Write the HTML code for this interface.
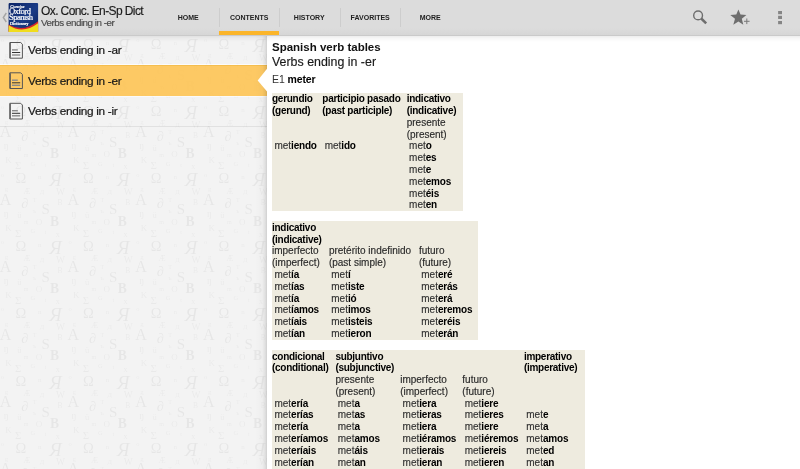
<!DOCTYPE html>
<html><head><meta charset="utf-8">
<style>
*{margin:0;padding:0;box-sizing:border-box}
html,body{width:800px;height:469px;overflow:hidden;background:#fff;font-family:"Liberation Sans",sans-serif;color:#111}
.abs{position:absolute;white-space:nowrap}
#hdr{position:absolute;left:0;top:0;width:800px;height:35px;background:linear-gradient(to bottom,#dcdcdc 0,#dcdcdc 80%,#d6d6d6 100%)}
#hline{position:absolute;left:0;top:35px;width:800px;height:1px;background:#cacaca}
#title{left:41px;top:3.6px;font-size:12px;letter-spacing:-0.6px;color:#1a1a1a;-webkit-text-stroke:0.15px #1a1a1a}
#sub{left:41px;top:16.8px;font-size:9.8px;letter-spacing:-0.47px;color:#4a4a4a;-webkit-text-stroke:0.15px #4a4a4a}
.tab{position:absolute;top:0;height:35px;width:60.4px;font-size:7px;font-weight:bold;color:#222;text-align:center;line-height:35px}
.sep{position:absolute;top:8px;width:1px;height:19px;background:#cdcdcd}
#ind{position:absolute;left:219px;top:31px;width:60px;height:4px;background:#fbb52a}
#left{position:absolute;left:0;top:36px;width:267px;height:433px;background:#f3f3f3;overflow:hidden}
#lshadow{position:absolute;left:255px;top:36px;width:12px;height:433px;background:linear-gradient(to right,rgba(0,0,0,0),rgba(0,0,0,0.02) 60%,rgba(0,0,0,0.08) 85%,rgba(0,0,0,0.15))}
.lt{left:28px;font-size:11.8px;letter-spacing:-0.3px;color:#161616;-webkit-text-stroke:0.2px #161616}
.divl{position:absolute;left:0;width:267px;height:1px;background:rgba(0,0,0,0.05)}
.doc{position:absolute;left:9px;width:14px;height:17px}
#right{position:absolute;left:267px;top:36px;width:533px;height:433px;background:#fff}
.tb{position:absolute;background:#eeebdf}
.col{position:absolute;white-space:nowrap;font-size:10px;line-height:11.8px;color:#111}
.col b{font-weight:bold;letter-spacing:-0.27px;color:#000}
.col .r{color:#2a2a2a;-webkit-text-stroke:0.15px #2a2a2a}
.col .d{margin-left:2.4px;color:#333;-webkit-text-stroke:0.15px #333}
.col .d b{letter-spacing:-0.2px;color:#000;-webkit-text-stroke:0}
</style></head><body><div id="wrap" style="position:absolute;left:0;top:0;width:800px;height:469px;overflow:hidden;will-change:transform">
<div id="hdr">
  <svg class="abs" style="left:0;top:0" width="800" height="35" viewBox="0 0 800 35">
    <path d="M6.3 13 L3.3 17.5 L6.3 22" fill="none" stroke="#a5a5a5" stroke-width="1.4"/>
    <!-- logo -->
    <defs>
      <linearGradient id="lg" x1="0" y1="0" x2="1" y2="1">
        <stop offset="0" stop-color="#0c2466"/><stop offset="0.55" stop-color="#1a3b86"/><stop offset="1" stop-color="#0a1f5a"/>
      </linearGradient>
    </defs>
    <rect x="8.6" y="3" width="29.5" height="29" rx="1" fill="url(#lg)"/>
    <path d="M8.6 24.6 Q23 33 38.1 21.3 L38.1 32 L8.6 32 Z" fill="#d8262c"/>
    <path d="M8.6 25.2 Q23 34.5 38.1 23.2 L38.1 32 L8.6 32 Z" fill="#f0dc1e"/>
    <g fill="#fff" stroke="#fff" stroke-width="0.2" font-family="Liberation Serif" >
      <text x="10.3" y="7.9" font-size="4.4" font-style="italic">Concise</text>
      <text x="8.9" y="14.3" font-size="8.6" letter-spacing="-0.55">Oxford</text>
      <text x="8.9" y="20.4" font-size="8.6" letter-spacing="-0.5">Spanish</text>
      <text x="10" y="25" font-size="4.3">Dictionary</text>
    </g>
    <!-- search -->
    <circle cx="698.1" cy="15.4" r="4.4" fill="none" stroke="#6e6e6e" stroke-width="1.4"/>
    <path d="M701.2 18.5 L706.2 23.3" stroke="#6e6e6e" stroke-width="2.5" stroke-linecap="butt"/>
    <!-- star plus -->
    <path d="M738.4 9.5 L740.5 14.6 L746.4 15 L741.8 18.7 L743.3 24.7 L738.4 21.4 L733.3 24.7 L735 18.7 L730.3 15 L736.3 14.6 Z" fill="#6e6e6e"/>
    <path d="M744 21.3 H749.6 M746.8 18.5 V24.1" stroke="#7a7a7a" stroke-width="1"/>
    <!-- overflow -->
    <rect x="778.1" y="11" width="3.9" height="3.2" fill="#858585"/>
    <rect x="778.1" y="15.8" width="3.9" height="3.2" fill="#858585"/>
    <rect x="778.1" y="21" width="3.9" height="3.2" fill="#858585"/>
  </svg>
  <div class="abs" id="title">Ox. Conc. En-Sp Dict</div>
  <div class="abs" id="sub">Verbs ending in -er</div>
  <div class="tab" style="left:158px">HOME</div>
  <div class="sep" style="left:219px"></div>
  <div class="tab" style="left:219px">CONTENTS</div>
  <div class="sep" style="left:279px"></div>
  <div class="tab" style="left:279px">HISTORY</div>
  <div class="sep" style="left:340px"></div>
  <div class="tab" style="left:340px">FAVORITES</div>
  <div class="sep" style="left:400px"></div>
  <div class="tab" style="left:400px">MORE</div>
  <div id="ind"></div>
</div>
<div id="hline"></div>
<div id="left"></div>
<svg class="abs" style="left:0;top:36px" width="267" height="433">
<g transform="translate(-0.2 -45.5)"><g font-family="Liberation Serif" fill="#000">
<g fill-opacity="0.05">
<text x="0.0" y="12.0" font-size="16.0">A</text>
<text x="21.5" y="15.7" font-size="14.0">&#8706;</text>
<text x="41.6" y="21.7" font-size="15.0">S</text>
<text x="50.2" y="32.9" font-size="13.6" font-weight="bold">B</text>
<text x="15.6" y="58.0" font-size="14.5">&#937;</text>
<text x="49.5" y="61.0" font-size="19.0" font-style="italic">&#1071;</text>
</g><g fill-opacity="0.04">
<text x="33.0" y="9.0" font-size="6.0">T</text>
<text x="57.8" y="12.7" font-size="7.5">B</text>
<text x="33.0" y="20.2" font-size="6.5">&#1098;</text>
<text x="4.0" y="24.0" font-size="10.0">&#331;</text>
<text x="17.4" y="25.4" font-size="8.5">&#252;</text>
<text x="24.0" y="31.4" font-size="6.0">m</text>
<text x="36.0" y="32.0" font-size="9.0">O</text>
<text x="5.5" y="38.0" font-size="9.0">K</text>
<text x="15.2" y="44.0" font-size="11.0">&#931;</text>
<text x="30.6" y="40.4" font-size="6.5">G</text>
<text x="45.0" y="41.5" font-size="6.0">t</text>
<text x="56.0" y="44.0" font-size="8.0">x</text>
<text x="1.0" y="51.3" font-size="6.5">o</text>
<text x="38.3" y="54.0" font-size="7.0">n</text>
<text x="23.4" y="68.4" font-size="8.0">&#198;</text>
<text x="5.0" y="66.0" font-size="7.0">g</text>
<text x="40.0" y="69.0" font-size="6.5">&#1044;</text>
<text x="56.2" y="70.0" font-size="9.5">W</text>
</g></g></g>
<g transform="translate(-0.2 21.9)"><g font-family="Liberation Serif" fill="#000">
<g fill-opacity="0.05">
<text x="0.0" y="12.0" font-size="16.0">A</text>
<text x="21.5" y="15.7" font-size="14.0">&#8706;</text>
<text x="41.6" y="21.7" font-size="15.0">S</text>
<text x="50.2" y="32.9" font-size="13.6" font-weight="bold">B</text>
<text x="15.6" y="58.0" font-size="14.5">&#937;</text>
<text x="49.5" y="61.0" font-size="19.0" font-style="italic">&#1071;</text>
</g><g fill-opacity="0.04">
<text x="33.0" y="9.0" font-size="6.0">T</text>
<text x="57.8" y="12.7" font-size="7.5">B</text>
<text x="33.0" y="20.2" font-size="6.5">&#1098;</text>
<text x="4.0" y="24.0" font-size="10.0">&#331;</text>
<text x="17.4" y="25.4" font-size="8.5">&#252;</text>
<text x="24.0" y="31.4" font-size="6.0">m</text>
<text x="36.0" y="32.0" font-size="9.0">O</text>
<text x="5.5" y="38.0" font-size="9.0">K</text>
<text x="15.2" y="44.0" font-size="11.0">&#931;</text>
<text x="30.6" y="40.4" font-size="6.5">G</text>
<text x="45.0" y="41.5" font-size="6.0">t</text>
<text x="56.0" y="44.0" font-size="8.0">x</text>
<text x="1.0" y="51.3" font-size="6.5">o</text>
<text x="38.3" y="54.0" font-size="7.0">n</text>
<text x="23.4" y="68.4" font-size="8.0">&#198;</text>
<text x="5.0" y="66.0" font-size="7.0">g</text>
<text x="40.0" y="69.0" font-size="6.5">&#1044;</text>
<text x="56.2" y="70.0" font-size="9.5">W</text>
</g></g></g>
<g transform="translate(-0.2 89.3)"><g font-family="Liberation Serif" fill="#000">
<g fill-opacity="0.05">
<text x="0.0" y="12.0" font-size="16.0">A</text>
<text x="21.5" y="15.7" font-size="14.0">&#8706;</text>
<text x="41.6" y="21.7" font-size="15.0">S</text>
<text x="50.2" y="32.9" font-size="13.6" font-weight="bold">B</text>
<text x="15.6" y="58.0" font-size="14.5">&#937;</text>
<text x="49.5" y="61.0" font-size="19.0" font-style="italic">&#1071;</text>
</g><g fill-opacity="0.04">
<text x="33.0" y="9.0" font-size="6.0">T</text>
<text x="57.8" y="12.7" font-size="7.5">B</text>
<text x="33.0" y="20.2" font-size="6.5">&#1098;</text>
<text x="4.0" y="24.0" font-size="10.0">&#331;</text>
<text x="17.4" y="25.4" font-size="8.5">&#252;</text>
<text x="24.0" y="31.4" font-size="6.0">m</text>
<text x="36.0" y="32.0" font-size="9.0">O</text>
<text x="5.5" y="38.0" font-size="9.0">K</text>
<text x="15.2" y="44.0" font-size="11.0">&#931;</text>
<text x="30.6" y="40.4" font-size="6.5">G</text>
<text x="45.0" y="41.5" font-size="6.0">t</text>
<text x="56.0" y="44.0" font-size="8.0">x</text>
<text x="1.0" y="51.3" font-size="6.5">o</text>
<text x="38.3" y="54.0" font-size="7.0">n</text>
<text x="23.4" y="68.4" font-size="8.0">&#198;</text>
<text x="5.0" y="66.0" font-size="7.0">g</text>
<text x="40.0" y="69.0" font-size="6.5">&#1044;</text>
<text x="56.2" y="70.0" font-size="9.5">W</text>
</g></g></g>
<g transform="translate(-0.2 156.7)"><g font-family="Liberation Serif" fill="#000">
<g fill-opacity="0.05">
<text x="0.0" y="12.0" font-size="16.0">A</text>
<text x="21.5" y="15.7" font-size="14.0">&#8706;</text>
<text x="41.6" y="21.7" font-size="15.0">S</text>
<text x="50.2" y="32.9" font-size="13.6" font-weight="bold">B</text>
<text x="15.6" y="58.0" font-size="14.5">&#937;</text>
<text x="49.5" y="61.0" font-size="19.0" font-style="italic">&#1071;</text>
</g><g fill-opacity="0.04">
<text x="33.0" y="9.0" font-size="6.0">T</text>
<text x="57.8" y="12.7" font-size="7.5">B</text>
<text x="33.0" y="20.2" font-size="6.5">&#1098;</text>
<text x="4.0" y="24.0" font-size="10.0">&#331;</text>
<text x="17.4" y="25.4" font-size="8.5">&#252;</text>
<text x="24.0" y="31.4" font-size="6.0">m</text>
<text x="36.0" y="32.0" font-size="9.0">O</text>
<text x="5.5" y="38.0" font-size="9.0">K</text>
<text x="15.2" y="44.0" font-size="11.0">&#931;</text>
<text x="30.6" y="40.4" font-size="6.5">G</text>
<text x="45.0" y="41.5" font-size="6.0">t</text>
<text x="56.0" y="44.0" font-size="8.0">x</text>
<text x="1.0" y="51.3" font-size="6.5">o</text>
<text x="38.3" y="54.0" font-size="7.0">n</text>
<text x="23.4" y="68.4" font-size="8.0">&#198;</text>
<text x="5.0" y="66.0" font-size="7.0">g</text>
<text x="40.0" y="69.0" font-size="6.5">&#1044;</text>
<text x="56.2" y="70.0" font-size="9.5">W</text>
</g></g></g>
<g transform="translate(-0.2 224.1)"><g font-family="Liberation Serif" fill="#000">
<g fill-opacity="0.05">
<text x="0.0" y="12.0" font-size="16.0">A</text>
<text x="21.5" y="15.7" font-size="14.0">&#8706;</text>
<text x="41.6" y="21.7" font-size="15.0">S</text>
<text x="50.2" y="32.9" font-size="13.6" font-weight="bold">B</text>
<text x="15.6" y="58.0" font-size="14.5">&#937;</text>
<text x="49.5" y="61.0" font-size="19.0" font-style="italic">&#1071;</text>
</g><g fill-opacity="0.04">
<text x="33.0" y="9.0" font-size="6.0">T</text>
<text x="57.8" y="12.7" font-size="7.5">B</text>
<text x="33.0" y="20.2" font-size="6.5">&#1098;</text>
<text x="4.0" y="24.0" font-size="10.0">&#331;</text>
<text x="17.4" y="25.4" font-size="8.5">&#252;</text>
<text x="24.0" y="31.4" font-size="6.0">m</text>
<text x="36.0" y="32.0" font-size="9.0">O</text>
<text x="5.5" y="38.0" font-size="9.0">K</text>
<text x="15.2" y="44.0" font-size="11.0">&#931;</text>
<text x="30.6" y="40.4" font-size="6.5">G</text>
<text x="45.0" y="41.5" font-size="6.0">t</text>
<text x="56.0" y="44.0" font-size="8.0">x</text>
<text x="1.0" y="51.3" font-size="6.5">o</text>
<text x="38.3" y="54.0" font-size="7.0">n</text>
<text x="23.4" y="68.4" font-size="8.0">&#198;</text>
<text x="5.0" y="66.0" font-size="7.0">g</text>
<text x="40.0" y="69.0" font-size="6.5">&#1044;</text>
<text x="56.2" y="70.0" font-size="9.5">W</text>
</g></g></g>
<g transform="translate(-0.2 291.5)"><g font-family="Liberation Serif" fill="#000">
<g fill-opacity="0.05">
<text x="0.0" y="12.0" font-size="16.0">A</text>
<text x="21.5" y="15.7" font-size="14.0">&#8706;</text>
<text x="41.6" y="21.7" font-size="15.0">S</text>
<text x="50.2" y="32.9" font-size="13.6" font-weight="bold">B</text>
<text x="15.6" y="58.0" font-size="14.5">&#937;</text>
<text x="49.5" y="61.0" font-size="19.0" font-style="italic">&#1071;</text>
</g><g fill-opacity="0.04">
<text x="33.0" y="9.0" font-size="6.0">T</text>
<text x="57.8" y="12.7" font-size="7.5">B</text>
<text x="33.0" y="20.2" font-size="6.5">&#1098;</text>
<text x="4.0" y="24.0" font-size="10.0">&#331;</text>
<text x="17.4" y="25.4" font-size="8.5">&#252;</text>
<text x="24.0" y="31.4" font-size="6.0">m</text>
<text x="36.0" y="32.0" font-size="9.0">O</text>
<text x="5.5" y="38.0" font-size="9.0">K</text>
<text x="15.2" y="44.0" font-size="11.0">&#931;</text>
<text x="30.6" y="40.4" font-size="6.5">G</text>
<text x="45.0" y="41.5" font-size="6.0">t</text>
<text x="56.0" y="44.0" font-size="8.0">x</text>
<text x="1.0" y="51.3" font-size="6.5">o</text>
<text x="38.3" y="54.0" font-size="7.0">n</text>
<text x="23.4" y="68.4" font-size="8.0">&#198;</text>
<text x="5.0" y="66.0" font-size="7.0">g</text>
<text x="40.0" y="69.0" font-size="6.5">&#1044;</text>
<text x="56.2" y="70.0" font-size="9.5">W</text>
</g></g></g>
<g transform="translate(-0.2 358.9)"><g font-family="Liberation Serif" fill="#000">
<g fill-opacity="0.05">
<text x="0.0" y="12.0" font-size="16.0">A</text>
<text x="21.5" y="15.7" font-size="14.0">&#8706;</text>
<text x="41.6" y="21.7" font-size="15.0">S</text>
<text x="50.2" y="32.9" font-size="13.6" font-weight="bold">B</text>
<text x="15.6" y="58.0" font-size="14.5">&#937;</text>
<text x="49.5" y="61.0" font-size="19.0" font-style="italic">&#1071;</text>
</g><g fill-opacity="0.04">
<text x="33.0" y="9.0" font-size="6.0">T</text>
<text x="57.8" y="12.7" font-size="7.5">B</text>
<text x="33.0" y="20.2" font-size="6.5">&#1098;</text>
<text x="4.0" y="24.0" font-size="10.0">&#331;</text>
<text x="17.4" y="25.4" font-size="8.5">&#252;</text>
<text x="24.0" y="31.4" font-size="6.0">m</text>
<text x="36.0" y="32.0" font-size="9.0">O</text>
<text x="5.5" y="38.0" font-size="9.0">K</text>
<text x="15.2" y="44.0" font-size="11.0">&#931;</text>
<text x="30.6" y="40.4" font-size="6.5">G</text>
<text x="45.0" y="41.5" font-size="6.0">t</text>
<text x="56.0" y="44.0" font-size="8.0">x</text>
<text x="1.0" y="51.3" font-size="6.5">o</text>
<text x="38.3" y="54.0" font-size="7.0">n</text>
<text x="23.4" y="68.4" font-size="8.0">&#198;</text>
<text x="5.0" y="66.0" font-size="7.0">g</text>
<text x="40.0" y="69.0" font-size="6.5">&#1044;</text>
<text x="56.2" y="70.0" font-size="9.5">W</text>
</g></g></g>
<g transform="translate(-0.2 426.3)"><g font-family="Liberation Serif" fill="#000">
<g fill-opacity="0.05">
<text x="0.0" y="12.0" font-size="16.0">A</text>
<text x="21.5" y="15.7" font-size="14.0">&#8706;</text>
<text x="41.6" y="21.7" font-size="15.0">S</text>
<text x="50.2" y="32.9" font-size="13.6" font-weight="bold">B</text>
<text x="15.6" y="58.0" font-size="14.5">&#937;</text>
<text x="49.5" y="61.0" font-size="19.0" font-style="italic">&#1071;</text>
</g><g fill-opacity="0.04">
<text x="33.0" y="9.0" font-size="6.0">T</text>
<text x="57.8" y="12.7" font-size="7.5">B</text>
<text x="33.0" y="20.2" font-size="6.5">&#1098;</text>
<text x="4.0" y="24.0" font-size="10.0">&#331;</text>
<text x="17.4" y="25.4" font-size="8.5">&#252;</text>
<text x="24.0" y="31.4" font-size="6.0">m</text>
<text x="36.0" y="32.0" font-size="9.0">O</text>
<text x="5.5" y="38.0" font-size="9.0">K</text>
<text x="15.2" y="44.0" font-size="11.0">&#931;</text>
<text x="30.6" y="40.4" font-size="6.5">G</text>
<text x="45.0" y="41.5" font-size="6.0">t</text>
<text x="56.0" y="44.0" font-size="8.0">x</text>
<text x="1.0" y="51.3" font-size="6.5">o</text>
<text x="38.3" y="54.0" font-size="7.0">n</text>
<text x="23.4" y="68.4" font-size="8.0">&#198;</text>
<text x="5.0" y="66.0" font-size="7.0">g</text>
<text x="40.0" y="69.0" font-size="6.5">&#1044;</text>
<text x="56.2" y="70.0" font-size="9.5">W</text>
</g></g></g>
<g transform="translate(67.5 -45.5)"><g font-family="Liberation Serif" fill="#000">
<g fill-opacity="0.05">
<text x="0.0" y="12.0" font-size="16.0">A</text>
<text x="21.5" y="15.7" font-size="14.0">&#8706;</text>
<text x="41.6" y="21.7" font-size="15.0">S</text>
<text x="50.2" y="32.9" font-size="13.6" font-weight="bold">B</text>
<text x="15.6" y="58.0" font-size="14.5">&#937;</text>
<text x="49.5" y="61.0" font-size="19.0" font-style="italic">&#1071;</text>
</g><g fill-opacity="0.04">
<text x="33.0" y="9.0" font-size="6.0">T</text>
<text x="57.8" y="12.7" font-size="7.5">B</text>
<text x="33.0" y="20.2" font-size="6.5">&#1098;</text>
<text x="4.0" y="24.0" font-size="10.0">&#331;</text>
<text x="17.4" y="25.4" font-size="8.5">&#252;</text>
<text x="24.0" y="31.4" font-size="6.0">m</text>
<text x="36.0" y="32.0" font-size="9.0">O</text>
<text x="5.5" y="38.0" font-size="9.0">K</text>
<text x="15.2" y="44.0" font-size="11.0">&#931;</text>
<text x="30.6" y="40.4" font-size="6.5">G</text>
<text x="45.0" y="41.5" font-size="6.0">t</text>
<text x="56.0" y="44.0" font-size="8.0">x</text>
<text x="1.0" y="51.3" font-size="6.5">o</text>
<text x="38.3" y="54.0" font-size="7.0">n</text>
<text x="23.4" y="68.4" font-size="8.0">&#198;</text>
<text x="5.0" y="66.0" font-size="7.0">g</text>
<text x="40.0" y="69.0" font-size="6.5">&#1044;</text>
<text x="56.2" y="70.0" font-size="9.5">W</text>
</g></g></g>
<g transform="translate(67.5 21.9)"><g font-family="Liberation Serif" fill="#000">
<g fill-opacity="0.05">
<text x="0.0" y="12.0" font-size="16.0">A</text>
<text x="21.5" y="15.7" font-size="14.0">&#8706;</text>
<text x="41.6" y="21.7" font-size="15.0">S</text>
<text x="50.2" y="32.9" font-size="13.6" font-weight="bold">B</text>
<text x="15.6" y="58.0" font-size="14.5">&#937;</text>
<text x="49.5" y="61.0" font-size="19.0" font-style="italic">&#1071;</text>
</g><g fill-opacity="0.04">
<text x="33.0" y="9.0" font-size="6.0">T</text>
<text x="57.8" y="12.7" font-size="7.5">B</text>
<text x="33.0" y="20.2" font-size="6.5">&#1098;</text>
<text x="4.0" y="24.0" font-size="10.0">&#331;</text>
<text x="17.4" y="25.4" font-size="8.5">&#252;</text>
<text x="24.0" y="31.4" font-size="6.0">m</text>
<text x="36.0" y="32.0" font-size="9.0">O</text>
<text x="5.5" y="38.0" font-size="9.0">K</text>
<text x="15.2" y="44.0" font-size="11.0">&#931;</text>
<text x="30.6" y="40.4" font-size="6.5">G</text>
<text x="45.0" y="41.5" font-size="6.0">t</text>
<text x="56.0" y="44.0" font-size="8.0">x</text>
<text x="1.0" y="51.3" font-size="6.5">o</text>
<text x="38.3" y="54.0" font-size="7.0">n</text>
<text x="23.4" y="68.4" font-size="8.0">&#198;</text>
<text x="5.0" y="66.0" font-size="7.0">g</text>
<text x="40.0" y="69.0" font-size="6.5">&#1044;</text>
<text x="56.2" y="70.0" font-size="9.5">W</text>
</g></g></g>
<g transform="translate(67.5 89.3)"><g font-family="Liberation Serif" fill="#000">
<g fill-opacity="0.05">
<text x="0.0" y="12.0" font-size="16.0">A</text>
<text x="21.5" y="15.7" font-size="14.0">&#8706;</text>
<text x="41.6" y="21.7" font-size="15.0">S</text>
<text x="50.2" y="32.9" font-size="13.6" font-weight="bold">B</text>
<text x="15.6" y="58.0" font-size="14.5">&#937;</text>
<text x="49.5" y="61.0" font-size="19.0" font-style="italic">&#1071;</text>
</g><g fill-opacity="0.04">
<text x="33.0" y="9.0" font-size="6.0">T</text>
<text x="57.8" y="12.7" font-size="7.5">B</text>
<text x="33.0" y="20.2" font-size="6.5">&#1098;</text>
<text x="4.0" y="24.0" font-size="10.0">&#331;</text>
<text x="17.4" y="25.4" font-size="8.5">&#252;</text>
<text x="24.0" y="31.4" font-size="6.0">m</text>
<text x="36.0" y="32.0" font-size="9.0">O</text>
<text x="5.5" y="38.0" font-size="9.0">K</text>
<text x="15.2" y="44.0" font-size="11.0">&#931;</text>
<text x="30.6" y="40.4" font-size="6.5">G</text>
<text x="45.0" y="41.5" font-size="6.0">t</text>
<text x="56.0" y="44.0" font-size="8.0">x</text>
<text x="1.0" y="51.3" font-size="6.5">o</text>
<text x="38.3" y="54.0" font-size="7.0">n</text>
<text x="23.4" y="68.4" font-size="8.0">&#198;</text>
<text x="5.0" y="66.0" font-size="7.0">g</text>
<text x="40.0" y="69.0" font-size="6.5">&#1044;</text>
<text x="56.2" y="70.0" font-size="9.5">W</text>
</g></g></g>
<g transform="translate(67.5 156.7)"><g font-family="Liberation Serif" fill="#000">
<g fill-opacity="0.05">
<text x="0.0" y="12.0" font-size="16.0">A</text>
<text x="21.5" y="15.7" font-size="14.0">&#8706;</text>
<text x="41.6" y="21.7" font-size="15.0">S</text>
<text x="50.2" y="32.9" font-size="13.6" font-weight="bold">B</text>
<text x="15.6" y="58.0" font-size="14.5">&#937;</text>
<text x="49.5" y="61.0" font-size="19.0" font-style="italic">&#1071;</text>
</g><g fill-opacity="0.04">
<text x="33.0" y="9.0" font-size="6.0">T</text>
<text x="57.8" y="12.7" font-size="7.5">B</text>
<text x="33.0" y="20.2" font-size="6.5">&#1098;</text>
<text x="4.0" y="24.0" font-size="10.0">&#331;</text>
<text x="17.4" y="25.4" font-size="8.5">&#252;</text>
<text x="24.0" y="31.4" font-size="6.0">m</text>
<text x="36.0" y="32.0" font-size="9.0">O</text>
<text x="5.5" y="38.0" font-size="9.0">K</text>
<text x="15.2" y="44.0" font-size="11.0">&#931;</text>
<text x="30.6" y="40.4" font-size="6.5">G</text>
<text x="45.0" y="41.5" font-size="6.0">t</text>
<text x="56.0" y="44.0" font-size="8.0">x</text>
<text x="1.0" y="51.3" font-size="6.5">o</text>
<text x="38.3" y="54.0" font-size="7.0">n</text>
<text x="23.4" y="68.4" font-size="8.0">&#198;</text>
<text x="5.0" y="66.0" font-size="7.0">g</text>
<text x="40.0" y="69.0" font-size="6.5">&#1044;</text>
<text x="56.2" y="70.0" font-size="9.5">W</text>
</g></g></g>
<g transform="translate(67.5 224.1)"><g font-family="Liberation Serif" fill="#000">
<g fill-opacity="0.05">
<text x="0.0" y="12.0" font-size="16.0">A</text>
<text x="21.5" y="15.7" font-size="14.0">&#8706;</text>
<text x="41.6" y="21.7" font-size="15.0">S</text>
<text x="50.2" y="32.9" font-size="13.6" font-weight="bold">B</text>
<text x="15.6" y="58.0" font-size="14.5">&#937;</text>
<text x="49.5" y="61.0" font-size="19.0" font-style="italic">&#1071;</text>
</g><g fill-opacity="0.04">
<text x="33.0" y="9.0" font-size="6.0">T</text>
<text x="57.8" y="12.7" font-size="7.5">B</text>
<text x="33.0" y="20.2" font-size="6.5">&#1098;</text>
<text x="4.0" y="24.0" font-size="10.0">&#331;</text>
<text x="17.4" y="25.4" font-size="8.5">&#252;</text>
<text x="24.0" y="31.4" font-size="6.0">m</text>
<text x="36.0" y="32.0" font-size="9.0">O</text>
<text x="5.5" y="38.0" font-size="9.0">K</text>
<text x="15.2" y="44.0" font-size="11.0">&#931;</text>
<text x="30.6" y="40.4" font-size="6.5">G</text>
<text x="45.0" y="41.5" font-size="6.0">t</text>
<text x="56.0" y="44.0" font-size="8.0">x</text>
<text x="1.0" y="51.3" font-size="6.5">o</text>
<text x="38.3" y="54.0" font-size="7.0">n</text>
<text x="23.4" y="68.4" font-size="8.0">&#198;</text>
<text x="5.0" y="66.0" font-size="7.0">g</text>
<text x="40.0" y="69.0" font-size="6.5">&#1044;</text>
<text x="56.2" y="70.0" font-size="9.5">W</text>
</g></g></g>
<g transform="translate(67.5 291.5)"><g font-family="Liberation Serif" fill="#000">
<g fill-opacity="0.05">
<text x="0.0" y="12.0" font-size="16.0">A</text>
<text x="21.5" y="15.7" font-size="14.0">&#8706;</text>
<text x="41.6" y="21.7" font-size="15.0">S</text>
<text x="50.2" y="32.9" font-size="13.6" font-weight="bold">B</text>
<text x="15.6" y="58.0" font-size="14.5">&#937;</text>
<text x="49.5" y="61.0" font-size="19.0" font-style="italic">&#1071;</text>
</g><g fill-opacity="0.04">
<text x="33.0" y="9.0" font-size="6.0">T</text>
<text x="57.8" y="12.7" font-size="7.5">B</text>
<text x="33.0" y="20.2" font-size="6.5">&#1098;</text>
<text x="4.0" y="24.0" font-size="10.0">&#331;</text>
<text x="17.4" y="25.4" font-size="8.5">&#252;</text>
<text x="24.0" y="31.4" font-size="6.0">m</text>
<text x="36.0" y="32.0" font-size="9.0">O</text>
<text x="5.5" y="38.0" font-size="9.0">K</text>
<text x="15.2" y="44.0" font-size="11.0">&#931;</text>
<text x="30.6" y="40.4" font-size="6.5">G</text>
<text x="45.0" y="41.5" font-size="6.0">t</text>
<text x="56.0" y="44.0" font-size="8.0">x</text>
<text x="1.0" y="51.3" font-size="6.5">o</text>
<text x="38.3" y="54.0" font-size="7.0">n</text>
<text x="23.4" y="68.4" font-size="8.0">&#198;</text>
<text x="5.0" y="66.0" font-size="7.0">g</text>
<text x="40.0" y="69.0" font-size="6.5">&#1044;</text>
<text x="56.2" y="70.0" font-size="9.5">W</text>
</g></g></g>
<g transform="translate(67.5 358.9)"><g font-family="Liberation Serif" fill="#000">
<g fill-opacity="0.05">
<text x="0.0" y="12.0" font-size="16.0">A</text>
<text x="21.5" y="15.7" font-size="14.0">&#8706;</text>
<text x="41.6" y="21.7" font-size="15.0">S</text>
<text x="50.2" y="32.9" font-size="13.6" font-weight="bold">B</text>
<text x="15.6" y="58.0" font-size="14.5">&#937;</text>
<text x="49.5" y="61.0" font-size="19.0" font-style="italic">&#1071;</text>
</g><g fill-opacity="0.04">
<text x="33.0" y="9.0" font-size="6.0">T</text>
<text x="57.8" y="12.7" font-size="7.5">B</text>
<text x="33.0" y="20.2" font-size="6.5">&#1098;</text>
<text x="4.0" y="24.0" font-size="10.0">&#331;</text>
<text x="17.4" y="25.4" font-size="8.5">&#252;</text>
<text x="24.0" y="31.4" font-size="6.0">m</text>
<text x="36.0" y="32.0" font-size="9.0">O</text>
<text x="5.5" y="38.0" font-size="9.0">K</text>
<text x="15.2" y="44.0" font-size="11.0">&#931;</text>
<text x="30.6" y="40.4" font-size="6.5">G</text>
<text x="45.0" y="41.5" font-size="6.0">t</text>
<text x="56.0" y="44.0" font-size="8.0">x</text>
<text x="1.0" y="51.3" font-size="6.5">o</text>
<text x="38.3" y="54.0" font-size="7.0">n</text>
<text x="23.4" y="68.4" font-size="8.0">&#198;</text>
<text x="5.0" y="66.0" font-size="7.0">g</text>
<text x="40.0" y="69.0" font-size="6.5">&#1044;</text>
<text x="56.2" y="70.0" font-size="9.5">W</text>
</g></g></g>
<g transform="translate(67.5 426.3)"><g font-family="Liberation Serif" fill="#000">
<g fill-opacity="0.05">
<text x="0.0" y="12.0" font-size="16.0">A</text>
<text x="21.5" y="15.7" font-size="14.0">&#8706;</text>
<text x="41.6" y="21.7" font-size="15.0">S</text>
<text x="50.2" y="32.9" font-size="13.6" font-weight="bold">B</text>
<text x="15.6" y="58.0" font-size="14.5">&#937;</text>
<text x="49.5" y="61.0" font-size="19.0" font-style="italic">&#1071;</text>
</g><g fill-opacity="0.04">
<text x="33.0" y="9.0" font-size="6.0">T</text>
<text x="57.8" y="12.7" font-size="7.5">B</text>
<text x="33.0" y="20.2" font-size="6.5">&#1098;</text>
<text x="4.0" y="24.0" font-size="10.0">&#331;</text>
<text x="17.4" y="25.4" font-size="8.5">&#252;</text>
<text x="24.0" y="31.4" font-size="6.0">m</text>
<text x="36.0" y="32.0" font-size="9.0">O</text>
<text x="5.5" y="38.0" font-size="9.0">K</text>
<text x="15.2" y="44.0" font-size="11.0">&#931;</text>
<text x="30.6" y="40.4" font-size="6.5">G</text>
<text x="45.0" y="41.5" font-size="6.0">t</text>
<text x="56.0" y="44.0" font-size="8.0">x</text>
<text x="1.0" y="51.3" font-size="6.5">o</text>
<text x="38.3" y="54.0" font-size="7.0">n</text>
<text x="23.4" y="68.4" font-size="8.0">&#198;</text>
<text x="5.0" y="66.0" font-size="7.0">g</text>
<text x="40.0" y="69.0" font-size="6.5">&#1044;</text>
<text x="56.2" y="70.0" font-size="9.5">W</text>
</g></g></g>
<g transform="translate(135.2 -45.5)"><g font-family="Liberation Serif" fill="#000">
<g fill-opacity="0.05">
<text x="0.0" y="12.0" font-size="16.0">A</text>
<text x="21.5" y="15.7" font-size="14.0">&#8706;</text>
<text x="41.6" y="21.7" font-size="15.0">S</text>
<text x="50.2" y="32.9" font-size="13.6" font-weight="bold">B</text>
<text x="15.6" y="58.0" font-size="14.5">&#937;</text>
<text x="49.5" y="61.0" font-size="19.0" font-style="italic">&#1071;</text>
</g><g fill-opacity="0.04">
<text x="33.0" y="9.0" font-size="6.0">T</text>
<text x="57.8" y="12.7" font-size="7.5">B</text>
<text x="33.0" y="20.2" font-size="6.5">&#1098;</text>
<text x="4.0" y="24.0" font-size="10.0">&#331;</text>
<text x="17.4" y="25.4" font-size="8.5">&#252;</text>
<text x="24.0" y="31.4" font-size="6.0">m</text>
<text x="36.0" y="32.0" font-size="9.0">O</text>
<text x="5.5" y="38.0" font-size="9.0">K</text>
<text x="15.2" y="44.0" font-size="11.0">&#931;</text>
<text x="30.6" y="40.4" font-size="6.5">G</text>
<text x="45.0" y="41.5" font-size="6.0">t</text>
<text x="56.0" y="44.0" font-size="8.0">x</text>
<text x="1.0" y="51.3" font-size="6.5">o</text>
<text x="38.3" y="54.0" font-size="7.0">n</text>
<text x="23.4" y="68.4" font-size="8.0">&#198;</text>
<text x="5.0" y="66.0" font-size="7.0">g</text>
<text x="40.0" y="69.0" font-size="6.5">&#1044;</text>
<text x="56.2" y="70.0" font-size="9.5">W</text>
</g></g></g>
<g transform="translate(135.2 21.9)"><g font-family="Liberation Serif" fill="#000">
<g fill-opacity="0.05">
<text x="0.0" y="12.0" font-size="16.0">A</text>
<text x="21.5" y="15.7" font-size="14.0">&#8706;</text>
<text x="41.6" y="21.7" font-size="15.0">S</text>
<text x="50.2" y="32.9" font-size="13.6" font-weight="bold">B</text>
<text x="15.6" y="58.0" font-size="14.5">&#937;</text>
<text x="49.5" y="61.0" font-size="19.0" font-style="italic">&#1071;</text>
</g><g fill-opacity="0.04">
<text x="33.0" y="9.0" font-size="6.0">T</text>
<text x="57.8" y="12.7" font-size="7.5">B</text>
<text x="33.0" y="20.2" font-size="6.5">&#1098;</text>
<text x="4.0" y="24.0" font-size="10.0">&#331;</text>
<text x="17.4" y="25.4" font-size="8.5">&#252;</text>
<text x="24.0" y="31.4" font-size="6.0">m</text>
<text x="36.0" y="32.0" font-size="9.0">O</text>
<text x="5.5" y="38.0" font-size="9.0">K</text>
<text x="15.2" y="44.0" font-size="11.0">&#931;</text>
<text x="30.6" y="40.4" font-size="6.5">G</text>
<text x="45.0" y="41.5" font-size="6.0">t</text>
<text x="56.0" y="44.0" font-size="8.0">x</text>
<text x="1.0" y="51.3" font-size="6.5">o</text>
<text x="38.3" y="54.0" font-size="7.0">n</text>
<text x="23.4" y="68.4" font-size="8.0">&#198;</text>
<text x="5.0" y="66.0" font-size="7.0">g</text>
<text x="40.0" y="69.0" font-size="6.5">&#1044;</text>
<text x="56.2" y="70.0" font-size="9.5">W</text>
</g></g></g>
<g transform="translate(135.2 89.3)"><g font-family="Liberation Serif" fill="#000">
<g fill-opacity="0.05">
<text x="0.0" y="12.0" font-size="16.0">A</text>
<text x="21.5" y="15.7" font-size="14.0">&#8706;</text>
<text x="41.6" y="21.7" font-size="15.0">S</text>
<text x="50.2" y="32.9" font-size="13.6" font-weight="bold">B</text>
<text x="15.6" y="58.0" font-size="14.5">&#937;</text>
<text x="49.5" y="61.0" font-size="19.0" font-style="italic">&#1071;</text>
</g><g fill-opacity="0.04">
<text x="33.0" y="9.0" font-size="6.0">T</text>
<text x="57.8" y="12.7" font-size="7.5">B</text>
<text x="33.0" y="20.2" font-size="6.5">&#1098;</text>
<text x="4.0" y="24.0" font-size="10.0">&#331;</text>
<text x="17.4" y="25.4" font-size="8.5">&#252;</text>
<text x="24.0" y="31.4" font-size="6.0">m</text>
<text x="36.0" y="32.0" font-size="9.0">O</text>
<text x="5.5" y="38.0" font-size="9.0">K</text>
<text x="15.2" y="44.0" font-size="11.0">&#931;</text>
<text x="30.6" y="40.4" font-size="6.5">G</text>
<text x="45.0" y="41.5" font-size="6.0">t</text>
<text x="56.0" y="44.0" font-size="8.0">x</text>
<text x="1.0" y="51.3" font-size="6.5">o</text>
<text x="38.3" y="54.0" font-size="7.0">n</text>
<text x="23.4" y="68.4" font-size="8.0">&#198;</text>
<text x="5.0" y="66.0" font-size="7.0">g</text>
<text x="40.0" y="69.0" font-size="6.5">&#1044;</text>
<text x="56.2" y="70.0" font-size="9.5">W</text>
</g></g></g>
<g transform="translate(135.2 156.7)"><g font-family="Liberation Serif" fill="#000">
<g fill-opacity="0.05">
<text x="0.0" y="12.0" font-size="16.0">A</text>
<text x="21.5" y="15.7" font-size="14.0">&#8706;</text>
<text x="41.6" y="21.7" font-size="15.0">S</text>
<text x="50.2" y="32.9" font-size="13.6" font-weight="bold">B</text>
<text x="15.6" y="58.0" font-size="14.5">&#937;</text>
<text x="49.5" y="61.0" font-size="19.0" font-style="italic">&#1071;</text>
</g><g fill-opacity="0.04">
<text x="33.0" y="9.0" font-size="6.0">T</text>
<text x="57.8" y="12.7" font-size="7.5">B</text>
<text x="33.0" y="20.2" font-size="6.5">&#1098;</text>
<text x="4.0" y="24.0" font-size="10.0">&#331;</text>
<text x="17.4" y="25.4" font-size="8.5">&#252;</text>
<text x="24.0" y="31.4" font-size="6.0">m</text>
<text x="36.0" y="32.0" font-size="9.0">O</text>
<text x="5.5" y="38.0" font-size="9.0">K</text>
<text x="15.2" y="44.0" font-size="11.0">&#931;</text>
<text x="30.6" y="40.4" font-size="6.5">G</text>
<text x="45.0" y="41.5" font-size="6.0">t</text>
<text x="56.0" y="44.0" font-size="8.0">x</text>
<text x="1.0" y="51.3" font-size="6.5">o</text>
<text x="38.3" y="54.0" font-size="7.0">n</text>
<text x="23.4" y="68.4" font-size="8.0">&#198;</text>
<text x="5.0" y="66.0" font-size="7.0">g</text>
<text x="40.0" y="69.0" font-size="6.5">&#1044;</text>
<text x="56.2" y="70.0" font-size="9.5">W</text>
</g></g></g>
<g transform="translate(135.2 224.1)"><g font-family="Liberation Serif" fill="#000">
<g fill-opacity="0.05">
<text x="0.0" y="12.0" font-size="16.0">A</text>
<text x="21.5" y="15.7" font-size="14.0">&#8706;</text>
<text x="41.6" y="21.7" font-size="15.0">S</text>
<text x="50.2" y="32.9" font-size="13.6" font-weight="bold">B</text>
<text x="15.6" y="58.0" font-size="14.5">&#937;</text>
<text x="49.5" y="61.0" font-size="19.0" font-style="italic">&#1071;</text>
</g><g fill-opacity="0.04">
<text x="33.0" y="9.0" font-size="6.0">T</text>
<text x="57.8" y="12.7" font-size="7.5">B</text>
<text x="33.0" y="20.2" font-size="6.5">&#1098;</text>
<text x="4.0" y="24.0" font-size="10.0">&#331;</text>
<text x="17.4" y="25.4" font-size="8.5">&#252;</text>
<text x="24.0" y="31.4" font-size="6.0">m</text>
<text x="36.0" y="32.0" font-size="9.0">O</text>
<text x="5.5" y="38.0" font-size="9.0">K</text>
<text x="15.2" y="44.0" font-size="11.0">&#931;</text>
<text x="30.6" y="40.4" font-size="6.5">G</text>
<text x="45.0" y="41.5" font-size="6.0">t</text>
<text x="56.0" y="44.0" font-size="8.0">x</text>
<text x="1.0" y="51.3" font-size="6.5">o</text>
<text x="38.3" y="54.0" font-size="7.0">n</text>
<text x="23.4" y="68.4" font-size="8.0">&#198;</text>
<text x="5.0" y="66.0" font-size="7.0">g</text>
<text x="40.0" y="69.0" font-size="6.5">&#1044;</text>
<text x="56.2" y="70.0" font-size="9.5">W</text>
</g></g></g>
<g transform="translate(135.2 291.5)"><g font-family="Liberation Serif" fill="#000">
<g fill-opacity="0.05">
<text x="0.0" y="12.0" font-size="16.0">A</text>
<text x="21.5" y="15.7" font-size="14.0">&#8706;</text>
<text x="41.6" y="21.7" font-size="15.0">S</text>
<text x="50.2" y="32.9" font-size="13.6" font-weight="bold">B</text>
<text x="15.6" y="58.0" font-size="14.5">&#937;</text>
<text x="49.5" y="61.0" font-size="19.0" font-style="italic">&#1071;</text>
</g><g fill-opacity="0.04">
<text x="33.0" y="9.0" font-size="6.0">T</text>
<text x="57.8" y="12.7" font-size="7.5">B</text>
<text x="33.0" y="20.2" font-size="6.5">&#1098;</text>
<text x="4.0" y="24.0" font-size="10.0">&#331;</text>
<text x="17.4" y="25.4" font-size="8.5">&#252;</text>
<text x="24.0" y="31.4" font-size="6.0">m</text>
<text x="36.0" y="32.0" font-size="9.0">O</text>
<text x="5.5" y="38.0" font-size="9.0">K</text>
<text x="15.2" y="44.0" font-size="11.0">&#931;</text>
<text x="30.6" y="40.4" font-size="6.5">G</text>
<text x="45.0" y="41.5" font-size="6.0">t</text>
<text x="56.0" y="44.0" font-size="8.0">x</text>
<text x="1.0" y="51.3" font-size="6.5">o</text>
<text x="38.3" y="54.0" font-size="7.0">n</text>
<text x="23.4" y="68.4" font-size="8.0">&#198;</text>
<text x="5.0" y="66.0" font-size="7.0">g</text>
<text x="40.0" y="69.0" font-size="6.5">&#1044;</text>
<text x="56.2" y="70.0" font-size="9.5">W</text>
</g></g></g>
<g transform="translate(135.2 358.9)"><g font-family="Liberation Serif" fill="#000">
<g fill-opacity="0.05">
<text x="0.0" y="12.0" font-size="16.0">A</text>
<text x="21.5" y="15.7" font-size="14.0">&#8706;</text>
<text x="41.6" y="21.7" font-size="15.0">S</text>
<text x="50.2" y="32.9" font-size="13.6" font-weight="bold">B</text>
<text x="15.6" y="58.0" font-size="14.5">&#937;</text>
<text x="49.5" y="61.0" font-size="19.0" font-style="italic">&#1071;</text>
</g><g fill-opacity="0.04">
<text x="33.0" y="9.0" font-size="6.0">T</text>
<text x="57.8" y="12.7" font-size="7.5">B</text>
<text x="33.0" y="20.2" font-size="6.5">&#1098;</text>
<text x="4.0" y="24.0" font-size="10.0">&#331;</text>
<text x="17.4" y="25.4" font-size="8.5">&#252;</text>
<text x="24.0" y="31.4" font-size="6.0">m</text>
<text x="36.0" y="32.0" font-size="9.0">O</text>
<text x="5.5" y="38.0" font-size="9.0">K</text>
<text x="15.2" y="44.0" font-size="11.0">&#931;</text>
<text x="30.6" y="40.4" font-size="6.5">G</text>
<text x="45.0" y="41.5" font-size="6.0">t</text>
<text x="56.0" y="44.0" font-size="8.0">x</text>
<text x="1.0" y="51.3" font-size="6.5">o</text>
<text x="38.3" y="54.0" font-size="7.0">n</text>
<text x="23.4" y="68.4" font-size="8.0">&#198;</text>
<text x="5.0" y="66.0" font-size="7.0">g</text>
<text x="40.0" y="69.0" font-size="6.5">&#1044;</text>
<text x="56.2" y="70.0" font-size="9.5">W</text>
</g></g></g>
<g transform="translate(135.2 426.3)"><g font-family="Liberation Serif" fill="#000">
<g fill-opacity="0.05">
<text x="0.0" y="12.0" font-size="16.0">A</text>
<text x="21.5" y="15.7" font-size="14.0">&#8706;</text>
<text x="41.6" y="21.7" font-size="15.0">S</text>
<text x="50.2" y="32.9" font-size="13.6" font-weight="bold">B</text>
<text x="15.6" y="58.0" font-size="14.5">&#937;</text>
<text x="49.5" y="61.0" font-size="19.0" font-style="italic">&#1071;</text>
</g><g fill-opacity="0.04">
<text x="33.0" y="9.0" font-size="6.0">T</text>
<text x="57.8" y="12.7" font-size="7.5">B</text>
<text x="33.0" y="20.2" font-size="6.5">&#1098;</text>
<text x="4.0" y="24.0" font-size="10.0">&#331;</text>
<text x="17.4" y="25.4" font-size="8.5">&#252;</text>
<text x="24.0" y="31.4" font-size="6.0">m</text>
<text x="36.0" y="32.0" font-size="9.0">O</text>
<text x="5.5" y="38.0" font-size="9.0">K</text>
<text x="15.2" y="44.0" font-size="11.0">&#931;</text>
<text x="30.6" y="40.4" font-size="6.5">G</text>
<text x="45.0" y="41.5" font-size="6.0">t</text>
<text x="56.0" y="44.0" font-size="8.0">x</text>
<text x="1.0" y="51.3" font-size="6.5">o</text>
<text x="38.3" y="54.0" font-size="7.0">n</text>
<text x="23.4" y="68.4" font-size="8.0">&#198;</text>
<text x="5.0" y="66.0" font-size="7.0">g</text>
<text x="40.0" y="69.0" font-size="6.5">&#1044;</text>
<text x="56.2" y="70.0" font-size="9.5">W</text>
</g></g></g>
<g transform="translate(202.9 -45.5)"><g font-family="Liberation Serif" fill="#000">
<g fill-opacity="0.05">
<text x="0.0" y="12.0" font-size="16.0">A</text>
<text x="21.5" y="15.7" font-size="14.0">&#8706;</text>
<text x="41.6" y="21.7" font-size="15.0">S</text>
<text x="50.2" y="32.9" font-size="13.6" font-weight="bold">B</text>
<text x="15.6" y="58.0" font-size="14.5">&#937;</text>
<text x="49.5" y="61.0" font-size="19.0" font-style="italic">&#1071;</text>
</g><g fill-opacity="0.04">
<text x="33.0" y="9.0" font-size="6.0">T</text>
<text x="57.8" y="12.7" font-size="7.5">B</text>
<text x="33.0" y="20.2" font-size="6.5">&#1098;</text>
<text x="4.0" y="24.0" font-size="10.0">&#331;</text>
<text x="17.4" y="25.4" font-size="8.5">&#252;</text>
<text x="24.0" y="31.4" font-size="6.0">m</text>
<text x="36.0" y="32.0" font-size="9.0">O</text>
<text x="5.5" y="38.0" font-size="9.0">K</text>
<text x="15.2" y="44.0" font-size="11.0">&#931;</text>
<text x="30.6" y="40.4" font-size="6.5">G</text>
<text x="45.0" y="41.5" font-size="6.0">t</text>
<text x="56.0" y="44.0" font-size="8.0">x</text>
<text x="1.0" y="51.3" font-size="6.5">o</text>
<text x="38.3" y="54.0" font-size="7.0">n</text>
<text x="23.4" y="68.4" font-size="8.0">&#198;</text>
<text x="5.0" y="66.0" font-size="7.0">g</text>
<text x="40.0" y="69.0" font-size="6.5">&#1044;</text>
<text x="56.2" y="70.0" font-size="9.5">W</text>
</g></g></g>
<g transform="translate(202.9 21.9)"><g font-family="Liberation Serif" fill="#000">
<g fill-opacity="0.05">
<text x="0.0" y="12.0" font-size="16.0">A</text>
<text x="21.5" y="15.7" font-size="14.0">&#8706;</text>
<text x="41.6" y="21.7" font-size="15.0">S</text>
<text x="50.2" y="32.9" font-size="13.6" font-weight="bold">B</text>
<text x="15.6" y="58.0" font-size="14.5">&#937;</text>
<text x="49.5" y="61.0" font-size="19.0" font-style="italic">&#1071;</text>
</g><g fill-opacity="0.04">
<text x="33.0" y="9.0" font-size="6.0">T</text>
<text x="57.8" y="12.7" font-size="7.5">B</text>
<text x="33.0" y="20.2" font-size="6.5">&#1098;</text>
<text x="4.0" y="24.0" font-size="10.0">&#331;</text>
<text x="17.4" y="25.4" font-size="8.5">&#252;</text>
<text x="24.0" y="31.4" font-size="6.0">m</text>
<text x="36.0" y="32.0" font-size="9.0">O</text>
<text x="5.5" y="38.0" font-size="9.0">K</text>
<text x="15.2" y="44.0" font-size="11.0">&#931;</text>
<text x="30.6" y="40.4" font-size="6.5">G</text>
<text x="45.0" y="41.5" font-size="6.0">t</text>
<text x="56.0" y="44.0" font-size="8.0">x</text>
<text x="1.0" y="51.3" font-size="6.5">o</text>
<text x="38.3" y="54.0" font-size="7.0">n</text>
<text x="23.4" y="68.4" font-size="8.0">&#198;</text>
<text x="5.0" y="66.0" font-size="7.0">g</text>
<text x="40.0" y="69.0" font-size="6.5">&#1044;</text>
<text x="56.2" y="70.0" font-size="9.5">W</text>
</g></g></g>
<g transform="translate(202.9 89.3)"><g font-family="Liberation Serif" fill="#000">
<g fill-opacity="0.05">
<text x="0.0" y="12.0" font-size="16.0">A</text>
<text x="21.5" y="15.7" font-size="14.0">&#8706;</text>
<text x="41.6" y="21.7" font-size="15.0">S</text>
<text x="50.2" y="32.9" font-size="13.6" font-weight="bold">B</text>
<text x="15.6" y="58.0" font-size="14.5">&#937;</text>
<text x="49.5" y="61.0" font-size="19.0" font-style="italic">&#1071;</text>
</g><g fill-opacity="0.04">
<text x="33.0" y="9.0" font-size="6.0">T</text>
<text x="57.8" y="12.7" font-size="7.5">B</text>
<text x="33.0" y="20.2" font-size="6.5">&#1098;</text>
<text x="4.0" y="24.0" font-size="10.0">&#331;</text>
<text x="17.4" y="25.4" font-size="8.5">&#252;</text>
<text x="24.0" y="31.4" font-size="6.0">m</text>
<text x="36.0" y="32.0" font-size="9.0">O</text>
<text x="5.5" y="38.0" font-size="9.0">K</text>
<text x="15.2" y="44.0" font-size="11.0">&#931;</text>
<text x="30.6" y="40.4" font-size="6.5">G</text>
<text x="45.0" y="41.5" font-size="6.0">t</text>
<text x="56.0" y="44.0" font-size="8.0">x</text>
<text x="1.0" y="51.3" font-size="6.5">o</text>
<text x="38.3" y="54.0" font-size="7.0">n</text>
<text x="23.4" y="68.4" font-size="8.0">&#198;</text>
<text x="5.0" y="66.0" font-size="7.0">g</text>
<text x="40.0" y="69.0" font-size="6.5">&#1044;</text>
<text x="56.2" y="70.0" font-size="9.5">W</text>
</g></g></g>
<g transform="translate(202.9 156.7)"><g font-family="Liberation Serif" fill="#000">
<g fill-opacity="0.05">
<text x="0.0" y="12.0" font-size="16.0">A</text>
<text x="21.5" y="15.7" font-size="14.0">&#8706;</text>
<text x="41.6" y="21.7" font-size="15.0">S</text>
<text x="50.2" y="32.9" font-size="13.6" font-weight="bold">B</text>
<text x="15.6" y="58.0" font-size="14.5">&#937;</text>
<text x="49.5" y="61.0" font-size="19.0" font-style="italic">&#1071;</text>
</g><g fill-opacity="0.04">
<text x="33.0" y="9.0" font-size="6.0">T</text>
<text x="57.8" y="12.7" font-size="7.5">B</text>
<text x="33.0" y="20.2" font-size="6.5">&#1098;</text>
<text x="4.0" y="24.0" font-size="10.0">&#331;</text>
<text x="17.4" y="25.4" font-size="8.5">&#252;</text>
<text x="24.0" y="31.4" font-size="6.0">m</text>
<text x="36.0" y="32.0" font-size="9.0">O</text>
<text x="5.5" y="38.0" font-size="9.0">K</text>
<text x="15.2" y="44.0" font-size="11.0">&#931;</text>
<text x="30.6" y="40.4" font-size="6.5">G</text>
<text x="45.0" y="41.5" font-size="6.0">t</text>
<text x="56.0" y="44.0" font-size="8.0">x</text>
<text x="1.0" y="51.3" font-size="6.5">o</text>
<text x="38.3" y="54.0" font-size="7.0">n</text>
<text x="23.4" y="68.4" font-size="8.0">&#198;</text>
<text x="5.0" y="66.0" font-size="7.0">g</text>
<text x="40.0" y="69.0" font-size="6.5">&#1044;</text>
<text x="56.2" y="70.0" font-size="9.5">W</text>
</g></g></g>
<g transform="translate(202.9 224.1)"><g font-family="Liberation Serif" fill="#000">
<g fill-opacity="0.05">
<text x="0.0" y="12.0" font-size="16.0">A</text>
<text x="21.5" y="15.7" font-size="14.0">&#8706;</text>
<text x="41.6" y="21.7" font-size="15.0">S</text>
<text x="50.2" y="32.9" font-size="13.6" font-weight="bold">B</text>
<text x="15.6" y="58.0" font-size="14.5">&#937;</text>
<text x="49.5" y="61.0" font-size="19.0" font-style="italic">&#1071;</text>
</g><g fill-opacity="0.04">
<text x="33.0" y="9.0" font-size="6.0">T</text>
<text x="57.8" y="12.7" font-size="7.5">B</text>
<text x="33.0" y="20.2" font-size="6.5">&#1098;</text>
<text x="4.0" y="24.0" font-size="10.0">&#331;</text>
<text x="17.4" y="25.4" font-size="8.5">&#252;</text>
<text x="24.0" y="31.4" font-size="6.0">m</text>
<text x="36.0" y="32.0" font-size="9.0">O</text>
<text x="5.5" y="38.0" font-size="9.0">K</text>
<text x="15.2" y="44.0" font-size="11.0">&#931;</text>
<text x="30.6" y="40.4" font-size="6.5">G</text>
<text x="45.0" y="41.5" font-size="6.0">t</text>
<text x="56.0" y="44.0" font-size="8.0">x</text>
<text x="1.0" y="51.3" font-size="6.5">o</text>
<text x="38.3" y="54.0" font-size="7.0">n</text>
<text x="23.4" y="68.4" font-size="8.0">&#198;</text>
<text x="5.0" y="66.0" font-size="7.0">g</text>
<text x="40.0" y="69.0" font-size="6.5">&#1044;</text>
<text x="56.2" y="70.0" font-size="9.5">W</text>
</g></g></g>
<g transform="translate(202.9 291.5)"><g font-family="Liberation Serif" fill="#000">
<g fill-opacity="0.05">
<text x="0.0" y="12.0" font-size="16.0">A</text>
<text x="21.5" y="15.7" font-size="14.0">&#8706;</text>
<text x="41.6" y="21.7" font-size="15.0">S</text>
<text x="50.2" y="32.9" font-size="13.6" font-weight="bold">B</text>
<text x="15.6" y="58.0" font-size="14.5">&#937;</text>
<text x="49.5" y="61.0" font-size="19.0" font-style="italic">&#1071;</text>
</g><g fill-opacity="0.04">
<text x="33.0" y="9.0" font-size="6.0">T</text>
<text x="57.8" y="12.7" font-size="7.5">B</text>
<text x="33.0" y="20.2" font-size="6.5">&#1098;</text>
<text x="4.0" y="24.0" font-size="10.0">&#331;</text>
<text x="17.4" y="25.4" font-size="8.5">&#252;</text>
<text x="24.0" y="31.4" font-size="6.0">m</text>
<text x="36.0" y="32.0" font-size="9.0">O</text>
<text x="5.5" y="38.0" font-size="9.0">K</text>
<text x="15.2" y="44.0" font-size="11.0">&#931;</text>
<text x="30.6" y="40.4" font-size="6.5">G</text>
<text x="45.0" y="41.5" font-size="6.0">t</text>
<text x="56.0" y="44.0" font-size="8.0">x</text>
<text x="1.0" y="51.3" font-size="6.5">o</text>
<text x="38.3" y="54.0" font-size="7.0">n</text>
<text x="23.4" y="68.4" font-size="8.0">&#198;</text>
<text x="5.0" y="66.0" font-size="7.0">g</text>
<text x="40.0" y="69.0" font-size="6.5">&#1044;</text>
<text x="56.2" y="70.0" font-size="9.5">W</text>
</g></g></g>
<g transform="translate(202.9 358.9)"><g font-family="Liberation Serif" fill="#000">
<g fill-opacity="0.05">
<text x="0.0" y="12.0" font-size="16.0">A</text>
<text x="21.5" y="15.7" font-size="14.0">&#8706;</text>
<text x="41.6" y="21.7" font-size="15.0">S</text>
<text x="50.2" y="32.9" font-size="13.6" font-weight="bold">B</text>
<text x="15.6" y="58.0" font-size="14.5">&#937;</text>
<text x="49.5" y="61.0" font-size="19.0" font-style="italic">&#1071;</text>
</g><g fill-opacity="0.04">
<text x="33.0" y="9.0" font-size="6.0">T</text>
<text x="57.8" y="12.7" font-size="7.5">B</text>
<text x="33.0" y="20.2" font-size="6.5">&#1098;</text>
<text x="4.0" y="24.0" font-size="10.0">&#331;</text>
<text x="17.4" y="25.4" font-size="8.5">&#252;</text>
<text x="24.0" y="31.4" font-size="6.0">m</text>
<text x="36.0" y="32.0" font-size="9.0">O</text>
<text x="5.5" y="38.0" font-size="9.0">K</text>
<text x="15.2" y="44.0" font-size="11.0">&#931;</text>
<text x="30.6" y="40.4" font-size="6.5">G</text>
<text x="45.0" y="41.5" font-size="6.0">t</text>
<text x="56.0" y="44.0" font-size="8.0">x</text>
<text x="1.0" y="51.3" font-size="6.5">o</text>
<text x="38.3" y="54.0" font-size="7.0">n</text>
<text x="23.4" y="68.4" font-size="8.0">&#198;</text>
<text x="5.0" y="66.0" font-size="7.0">g</text>
<text x="40.0" y="69.0" font-size="6.5">&#1044;</text>
<text x="56.2" y="70.0" font-size="9.5">W</text>
</g></g></g>
<g transform="translate(202.9 426.3)"><g font-family="Liberation Serif" fill="#000">
<g fill-opacity="0.05">
<text x="0.0" y="12.0" font-size="16.0">A</text>
<text x="21.5" y="15.7" font-size="14.0">&#8706;</text>
<text x="41.6" y="21.7" font-size="15.0">S</text>
<text x="50.2" y="32.9" font-size="13.6" font-weight="bold">B</text>
<text x="15.6" y="58.0" font-size="14.5">&#937;</text>
<text x="49.5" y="61.0" font-size="19.0" font-style="italic">&#1071;</text>
</g><g fill-opacity="0.04">
<text x="33.0" y="9.0" font-size="6.0">T</text>
<text x="57.8" y="12.7" font-size="7.5">B</text>
<text x="33.0" y="20.2" font-size="6.5">&#1098;</text>
<text x="4.0" y="24.0" font-size="10.0">&#331;</text>
<text x="17.4" y="25.4" font-size="8.5">&#252;</text>
<text x="24.0" y="31.4" font-size="6.0">m</text>
<text x="36.0" y="32.0" font-size="9.0">O</text>
<text x="5.5" y="38.0" font-size="9.0">K</text>
<text x="15.2" y="44.0" font-size="11.0">&#931;</text>
<text x="30.6" y="40.4" font-size="6.5">G</text>
<text x="45.0" y="41.5" font-size="6.0">t</text>
<text x="56.0" y="44.0" font-size="8.0">x</text>
<text x="1.0" y="51.3" font-size="6.5">o</text>
<text x="38.3" y="54.0" font-size="7.0">n</text>
<text x="23.4" y="68.4" font-size="8.0">&#198;</text>
<text x="5.0" y="66.0" font-size="7.0">g</text>
<text x="40.0" y="69.0" font-size="6.5">&#1044;</text>
<text x="56.2" y="70.0" font-size="9.5">W</text>
</g></g></g>
</svg>
<div class="abs" style="left:0;top:65.3px;width:267px;height:30.4px;background:#fdc65a;opacity:0.94"></div>
<div class="abs" style="left:0;top:65.3px;width:267px;height:1px;background:rgba(230,170,40,0.35)"></div>
<div class="divl" style="top:64.3px;background:rgba(255,255,255,0.7)"></div>
<div class="divl" style="top:95.7px;background:rgba(255,255,255,0.6)"></div>
<div class="divl" style="top:126px;background:rgba(0,0,0,0.07)"></div>
<div class="abs lt" style="top:43.2px">Verbs ending in -ar</div>
<div class="abs lt" style="top:73.8px">Verbs ending in -er</div>
<div class="abs lt" style="top:104.4px">Verbs ending in -ir</div>
<div id="lshadow"></div>
<svg class="abs" style="left:0;top:36px" width="267" height="100" viewBox="0 36 267 100">
  <g>
  <path d="M9.8 42.5 H20.7 L22.4 44.2 V58.2 H9.8 Z" fill="none" stroke="#555" stroke-width="1"/>
  <path d="M10.3 43 V57.7" stroke="#555" stroke-width="1"/>
  <rect x="12" y="49.2" width="5.8" height="1.4" fill="#8a8a8a"/>
  <rect x="12" y="52" width="8.2" height="1" fill="#333"/>
  <rect x="12" y="54.3" width="8.2" height="1.4" fill="#8a8a8a"/>
  </g>
  <g transform="translate(0 30.3)">
  <path d="M9.8 42.5 H20.7 L22.4 44.2 V58.2 H9.8 Z" fill="none" stroke="#555" stroke-width="1"/>
  <path d="M10.3 43 V57.7" stroke="#555" stroke-width="1"/>
  <rect x="12" y="49.2" width="5.8" height="1.4" fill="#8a8a8a"/>
  <rect x="12" y="52" width="8.2" height="1" fill="#333"/>
  <rect x="12" y="54.3" width="8.2" height="1.4" fill="#8a8a8a"/>
  </g>
  <g transform="translate(0 60.8)">
  <path d="M9.8 42.5 H20.7 L22.4 44.2 V58.2 H9.8 Z" fill="none" stroke="#555" stroke-width="1"/>
  <path d="M10.3 43 V57.7" stroke="#555" stroke-width="1"/>
  <rect x="12" y="49.2" width="5.8" height="1.4" fill="#8a8a8a"/>
  <rect x="12" y="52" width="8.2" height="1" fill="#333"/>
  <rect x="12" y="54.3" width="8.2" height="1.4" fill="#8a8a8a"/>
  </g>
  <path d="M267 68.7 L257.7 80.6 L267 91.5 Z" fill="#fff"/>
</svg>
<div class="abs" style="left:272px;top:40.8px;font-size:11.5px;font-weight:bold;color:#111">Spanish verb tables</div>
<div class="abs" style="left:272px;top:54.5px;font-size:12.4px;color:#1a1a1a;-webkit-text-stroke:0.15px #1a1a1a">Verbs ending in -er</div>
<div class="abs" style="left:272px;top:72.6px;font-size:10.5px;color:#333;letter-spacing:-0.1px">E1 <b style="color:#000">meter</b></div>
<div class="tb" style="left:272px;top:92.60px;width:191px;height:118.7px"></div>
<div class="col" style="left:272.00px;top:93.30px"><b>gerundio</b><br><b>(gerund)</b><br>&nbsp;<br>&nbsp;<br><span class="d">met<b>iendo</b></span></div>
<div class="col" style="left:322.30px;top:93.30px"><b>participio pasado</b><br><b>(past participle)</b><br>&nbsp;<br>&nbsp;<br><span class="d">met<b>ido</b></span></div>
<div class="col" style="left:406.70px;top:93.30px"><b>indicativo</b><br><b>(indicative)</b><br><span class="r">presente</span><br><span class="r">(present)</span><br><span class="d">met<b>o</b></span><br><span class="d">met<b>es</b></span><br><span class="d">met<b>e</b></span><br><span class="d">met<b>emos</b></span><br><span class="d">met<b>éis</b></span><br><span class="d">met<b>en</b></span></div>
<div class="tb" style="left:272px;top:221.15px;width:205.75px;height:118.45px"></div>
<div class="col" style="left:272.00px;top:221.85px"><b>indicativo</b><br><b>(indicative)</b><br><span class="r">imperfecto</span><br><span class="r">(imperfect)</span><br><span class="d">met<b>ía</b></span><br><span class="d">met<b>ías</b></span><br><span class="d">met<b>ía</b></span><br><span class="d">met<b>íamos</b></span><br><span class="d">met<b>íais</b></span><br><span class="d">met<b>ían</b></span></div>
<div class="col" style="left:328.90px;top:221.85px">&nbsp;<br>&nbsp;<br><span class="r">pretérito indefinido</span><br><span class="r">(past simple)</span><br><span class="d">met<b>í</b></span><br><span class="d">met<b>iste</b></span><br><span class="d">met<b>ió</b></span><br><span class="d">met<b>imos</b></span><br><span class="d">met<b>isteis</b></span><br><span class="d">met<b>ieron</b></span></div>
<div class="col" style="left:418.90px;top:221.85px">&nbsp;<br>&nbsp;<br><span class="r">futuro</span><br><span class="r">(future)</span><br><span class="d">met<b>eré</b></span><br><span class="d">met<b>erás</b></span><br><span class="d">met<b>erá</b></span><br><span class="d">met<b>eremos</b></span><br><span class="d">met<b>eréis</b></span><br><span class="d">met<b>erán</b></span></div>
<div class="tb" style="left:272px;top:349.80px;width:313.2px;height:130px"></div>
<div class="col" style="left:272.00px;top:350.50px"><b>condicional</b><br><b>(conditional)</b><br>&nbsp;<br>&nbsp;<br><span class="d">met<b>ería</b></span><br><span class="d">met<b>erías</b></span><br><span class="d">met<b>ería</b></span><br><span class="d">met<b>eríamos</b></span><br><span class="d">met<b>eríais</b></span><br><span class="d">met<b>erían</b></span></div>
<div class="col" style="left:335.40px;top:350.50px"><b>subjuntivo</b><br><b>(subjunctive)</b><br><span class="r">presente</span><br><span class="r">(present)</span><br><span class="d">met<b>a</b></span><br><span class="d">met<b>as</b></span><br><span class="d">met<b>a</b></span><br><span class="d">met<b>amos</b></span><br><span class="d">met<b>áis</b></span><br><span class="d">met<b>an</b></span></div>
<div class="col" style="left:400.20px;top:350.50px">&nbsp;<br>&nbsp;<br><span class="r">imperfecto</span><br><span class="r">(imperfect)</span><br><span class="d">met<b>iera</b></span><br><span class="d">met<b>ieras</b></span><br><span class="d">met<b>iera</b></span><br><span class="d">met<b>iéramos</b></span><br><span class="d">met<b>ierais</b></span><br><span class="d">met<b>ieran</b></span></div>
<div class="col" style="left:462.30px;top:350.50px">&nbsp;<br>&nbsp;<br><span class="r">futuro</span><br><span class="r">(future)</span><br><span class="d">met<b>iere</b></span><br><span class="d">met<b>ieres</b></span><br><span class="d">met<b>iere</b></span><br><span class="d">met<b>iéremos</b></span><br><span class="d">met<b>iereis</b></span><br><span class="d">met<b>ieren</b></span></div>
<div class="col" style="left:523.90px;top:350.50px"><b>imperativo</b><br><b>(imperative)</b><br>&nbsp;<br>&nbsp;<br>&nbsp;<br><span class="d">met<b>e</b></span><br><span class="d">met<b>a</b></span><br><span class="d">met<b>amos</b></span><br><span class="d">met<b>ed</b></span><br><span class="d">met<b>an</b></span></div>
<div class="abs" style="left:0;top:36px;width:800px;height:6px;background:linear-gradient(to bottom,rgba(0,0,0,0.07),rgba(0,0,0,0.03) 40%,rgba(0,0,0,0))"></div>
</div></body></html>
